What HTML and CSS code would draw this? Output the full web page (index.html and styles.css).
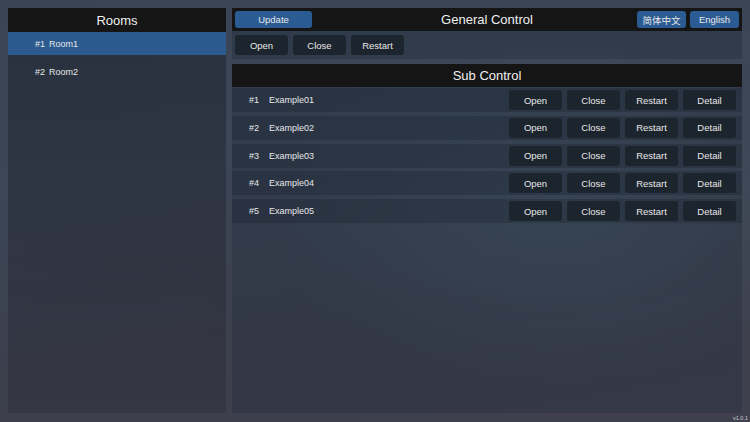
FILE: index.html
```html
<!DOCTYPE html>
<html>
<head>
<meta charset="utf-8">
<link rel="stylesheet" href="styles.css">
</head>
<body>
<div class="app">
  <aside class="panel rooms">
    <div class="head"><span class="title">Rooms</span></div>
    <div class="room selected"><span>#1</span><span>Room1</span></div>
    <div class="room"><span>#2</span><span>Room2</span></div>
  </aside>
  <main class="main">
    <section class="panel general">
      <div class="head bar">
        <button class="btn blue update">Update</button>
        <span class="title">General Control</span>
        <div class="langs">
          <button class="btn blue lang">简体中文</button>
          <button class="btn blue lang">English</button>
        </div>
      </div>
      <div class="actions">
        <button class="btn dark">Open</button>
        <button class="btn dark">Close</button>
        <button class="btn dark">Restart</button>
      </div>
    </section>
    <section class="panel sub">
      <div class="head"><span class="title">Sub Control</span></div>
      <div class="list">
        <div class="row"><span class="num">#1</span><span class="name">Example01</span><div class="ops"><button class="btn dark">Open</button><button class="btn dark">Close</button><button class="btn dark">Restart</button><button class="btn dark">Detail</button></div></div>
        <div class="row"><span class="num">#2</span><span class="name">Example02</span><div class="ops"><button class="btn dark">Open</button><button class="btn dark">Close</button><button class="btn dark">Restart</button><button class="btn dark">Detail</button></div></div>
        <div class="row"><span class="num">#3</span><span class="name">Example03</span><div class="ops"><button class="btn dark">Open</button><button class="btn dark">Close</button><button class="btn dark">Restart</button><button class="btn dark">Detail</button></div></div>
        <div class="row"><span class="num">#4</span><span class="name">Example04</span><div class="ops"><button class="btn dark">Open</button><button class="btn dark">Close</button><button class="btn dark">Restart</button><button class="btn dark">Detail</button></div></div>
        <div class="row"><span class="num">#5</span><span class="name">Example05</span><div class="ops"><button class="btn dark">Open</button><button class="btn dark">Close</button><button class="btn dark">Restart</button><button class="btn dark">Detail</button></div></div>
      </div>
    </section>
  </main>
</div>
<div class="version">v1.0.1</div>
</body>
</html>
```

FILE: styles.css
```css
html, body {
  margin: 0;
  padding: 0;
}
body {
  width: 750px;
  height: 422px;
  overflow: hidden;
  position: relative;
  font-family: "Liberation Sans", Arial, "Noto Sans CJK SC", sans-serif;
  color: #e6e8ea;
  background:
    radial-gradient(ellipse 420px 260px at 560px 210px, rgba(70, 95, 110, 0.55), rgba(70, 95, 110, 0) 70%),
    linear-gradient(170deg, #3a4455 0%, #3b4656 35%, #3c3f4c 70%, #403f4d 100%);
}
.app {
  display: flex;
  gap: 6px;
  padding: 8px 8px 9px 8px;
  height: 422px;
  box-sizing: border-box;
}
.panel {
  background: rgba(22, 26, 36, 0.32);
  display: flex;
  flex-direction: column;
}
.rooms {
  width: 218px;
  flex: none;
  background: linear-gradient(180deg, rgba(20, 24, 32, 0.45), rgba(40, 38, 52, 0.35));
}
.head {
  background: #151515;
  height: 24px;
  display: flex;
  align-items: center;
  justify-content: center;
  flex: none;
}
.title {
  font-size: 13px;
  color: #f0f0f0;
}
.room {
  height: 23px;
  display: flex;
  align-items: center;
  gap: 4px;
  padding-left: 27px;
  font-size: 9px;
  color: #e6e6e6;
  margin-bottom: 5px;
}
.room.selected {
  background: #2b5a8f;
}
.main {
  flex: 1;
  display: flex;
  flex-direction: column;
  gap: 5px;
}
.general {
  height: 51px;
  flex: none;
  background: rgba(30, 40, 55, 0.35);
}
.bar {
  height: 23px;
  position: relative;
  padding: 0 3px;
  justify-content: space-between;
}
.bar .title {
  position: absolute;
  left: 0;
  right: 0;
  text-align: center;
  pointer-events: none;
}
.btn {
  font-family: "Liberation Sans", Arial, "Noto Sans CJK SC", sans-serif;
  font-size: 9.5px;
  color: #e8e8e8;
  border: none;
  border-radius: 3px;
  padding: 0;
  margin: 0;
  cursor: pointer;
}
.blue {
  background: #2b5b93;
  height: 17px;
}
.update {
  width: 77px;
}
.langs {
  display: flex;
  gap: 4px;
  position: relative;
}
.lang {
  width: 49px;
}
.dark {
  background: #1c242d;
  width: 53px;
  height: 20px;
}
.actions {
  display: flex;
  gap: 5px;
  padding: 4px 3px;
}
.sub {
  flex: 1;
  background: rgba(30, 40, 55, 0.3);
}
.sub .head {
  height: 23px;
}
.list {
  display: flex;
  flex-direction: column;
  gap: 3.75px;
  padding-top: 1px;
}
.row {
  height: 24px;
  display: flex;
  align-items: center;
  padding: 0 6px 0 17px;
  font-size: 9px;
  background: rgba(20, 28, 38, 0.28);
}
.num {
  width: 20px;
}
.name {
  flex: 1;
}
.ops {
  display: flex;
  gap: 5px;
}
.version {
  position: absolute;
  right: 2px;
  bottom: 1px;
  font-size: 5.5px;
  color: #cfd2d8;
}
```
